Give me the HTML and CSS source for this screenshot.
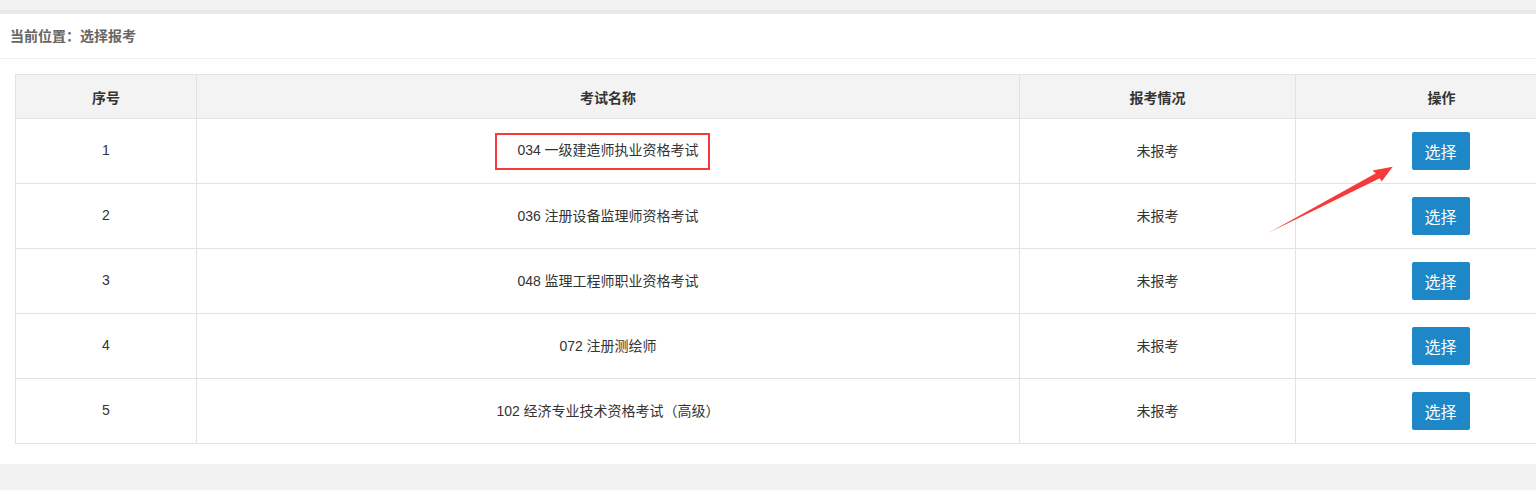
FILE: index.html
```html
<!DOCTYPE html>
<html lang="zh-CN">
<head>
<meta charset="utf-8">
<title>选择报考</title>
<link rel="stylesheet" href="styles.css">
</head>
<body>
<div class="topbar"></div>
<div class="band"></div>
<div class="panel">
  <div class="crumb">当前位置：选择报考</div>
  <div class="content">
    <table class="grid">
      <colgroup>
        <col class="c1"><col class="c2"><col class="c3"><col class="c4">
      </colgroup>
      <thead>
        <tr><th>序号</th><th>考试名称</th><th>报考情况</th><th>操作</th></tr>
      </thead>
      <tbody>
        <tr><td>1</td><td><span class="mark">034 一级建造师执业资格考试</span></td><td>未报考</td><td><button class="btn">选择</button></td></tr>
        <tr><td>2</td><td>036 注册设备监理师资格考试</td><td>未报考</td><td><button class="btn">选择</button></td></tr>
        <tr><td>3</td><td>048 监理工程师职业资格考试</td><td>未报考</td><td><button class="btn">选择</button></td></tr>
        <tr><td>4</td><td>072 注册测绘师</td><td>未报考</td><td><button class="btn">选择</button></td></tr>
        <tr><td>5</td><td>102 经济专业技术资格考试（高级）</td><td>未报考</td><td><button class="btn">选择</button></td></tr>
      </tbody>
    </table>
  </div>
</div>
<svg class="arrow" width="140" height="90" viewBox="0 0 140 90">
  <polygon points="8,83 115.8,23.2 112.5,20.5 132.7,16.8 121.7,31.5 119.8,28.2" fill="#f43a3a"/>
</svg>
</body>
</html>
```
FILE: styles.css
```css
html, body {
  margin: 0;
  padding: 0;
}
body {
  background: #f2f2f2;
  overflow: hidden;
  font-family: "Liberation Sans", "Noto Sans CJK SC", sans-serif;
  font-size: 14px;
  color: #333;
  position: relative;
  width: 1536px;
  height: 490px;
}
.topbar {
  height: 10px;
  background: #f2f2f2;
}
.band {
  height: 4px;
  background: #e6e8ea;
}
.panel {
  background: #fff;
  overflow: hidden;
}
.crumb {
  height: 44px;
  line-height: 44px;
  padding-left: 10px;
  font-weight: bold;
  color: #666;
  border-bottom: 1px solid #eeeeee;
}
.content {
  padding: 15px 0 20px 15px;
}
.grid {
  border-collapse: collapse;
  table-layout: fixed;
  width: 1572px;
}
.c1 { width: 181px; }
.c2 { width: 823px; }
.c3 { width: 276px; }
.c4 { width: 292px; }
.grid th, .grid td {
  border: 1px solid #e2e2e2;
  text-align: center;
  padding: 0;
}
.grid th {
  height: 43px;
  background: #f3f3f3;
  font-weight: bold;
  color: #333;
}
.grid td {
  height: 62px;
  padding-bottom: 2px;
  color: #333;
}
.mark {
  display: inline-block;
  border: 2px solid #f43a3a;
  padding: 0 9px 2px 20px;
  line-height: 31px;
  margin-right: 11px;
  position: relative;
  top: 1px;
}
.btn {
  width: 58px;
  height: 38px;
  border: none;
  border-radius: 2px;
  background: #1e87c7;
  color: #fff;
  font-family: "Noto Sans CJK SC", sans-serif;
  font-size: 16px;
  padding: 0;
  margin: 2px 2px 0 0;
  vertical-align: middle;
}
.arrow {
  position: absolute;
  left: 1260px;
  top: 150px;
}
```
